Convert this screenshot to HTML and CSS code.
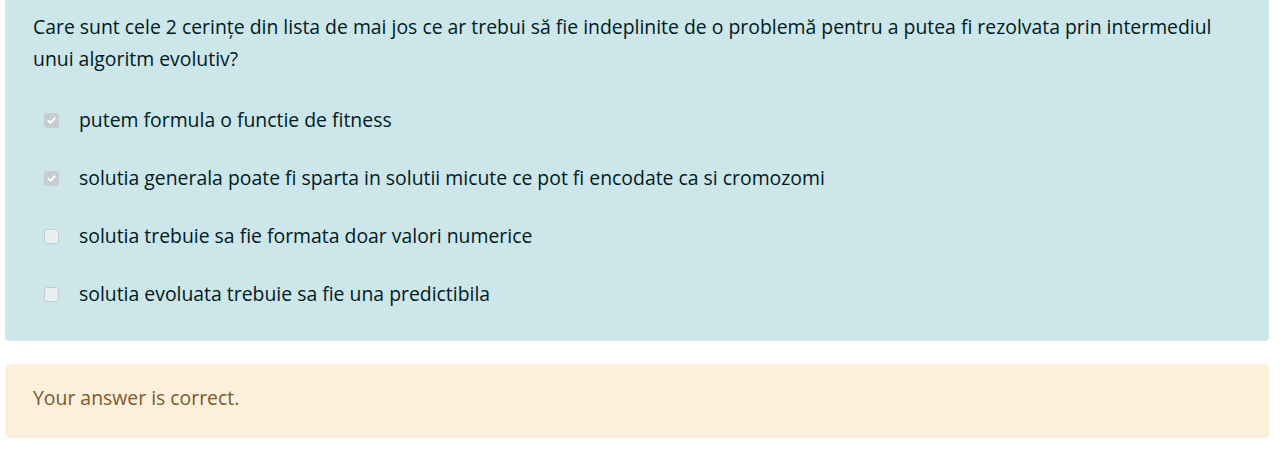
FILE: index.html
```html
<!DOCTYPE html>
<html lang="ro">
<head>
<meta charset="utf-8">
<title>Quiz</title>
<link rel="stylesheet" href="styles.css">
</head>
<body>
<div class="que">
  <div class="formulation">
    <div class="qtext">Care sunt cele 2 cerințe din lista de mai jos ce ar trebui să fie indeplinite de o problemă pentru a putea fi rezolvata prin intermediul unui algoritm evolutiv?</div>
    <div class="answer">
      <div class="option">
        <span class="cb checked"><svg viewBox="0 0 15 15" width="15" height="15"><path d="M3.6 7.7 L6.3 10.3 L11.4 4.8" fill="none" stroke="#fff" stroke-width="1.9" stroke-linecap="round" stroke-linejoin="round"/></svg></span>
        <span class="label">putem formula o functie de fitness</span>
      </div>
      <div class="option">
        <span class="cb checked"><svg viewBox="0 0 15 15" width="15" height="15"><path d="M3.6 7.7 L6.3 10.3 L11.4 4.8" fill="none" stroke="#fff" stroke-width="1.9" stroke-linecap="round" stroke-linejoin="round"/></svg></span>
        <span class="label">solutia generala poate fi sparta in solutii micute ce pot fi encodate ca si cromozomi</span>
      </div>
      <div class="option">
        <span class="cb"></span>
        <span class="label">solutia trebuie sa fie formata doar valori numerice</span>
      </div>
      <div class="option">
        <span class="cb"></span>
        <span class="label">solutia evoluata trebuie sa fie una predictibila</span>
      </div>
    </div>
  </div>
  <div class="outcome">Your answer is correct.</div>
</div>
</body>
</html>
```
FILE: styles.css
```css
html, body {
  margin: 0;
  padding: 0;
  background: #ffffff;
}
body {
  font-family: "Open Sans", "Noto Sans", sans-serif;
  font-size: 19.4px;
}
.que {
  width: 1264px;
  margin-left: 5px;
  display: flex;
  flex-direction: column;
  gap: 23px;
}
.formulation {
  background: #cce6ea;
  color: #001a1e;
  border-radius: 0 0 4px 4px;
  padding: 11px 28px 18px 28px;
}
.qtext {
  line-height: 32px;
}
.answer {
  margin-top: 16px;
  display: flex;
  flex-direction: column;
}
.option {
  display: flex;
  align-items: center;
  height: 58px;
  padding-left: 11px;
}
.cb {
  width: 15px;
  height: 15px;
  box-sizing: border-box;
  border-radius: 3px;
  border: 1px solid #c4cdcf;
  background: #eaeff0;
  display: flex;
  align-items: center;
  justify-content: center;
  flex: none;
}
.cb.checked {
  background: #c7cdce;
  border-color: #c7cdce;
}
.cb svg {
  display: block;
}
.label {
  margin-left: 20px;
  line-height: 26px;
}
.outcome {
  background: #fcefdc;
  color: #7d5a29;
  border-radius: 4px;
  height: 74px;
  box-sizing: border-box;
  padding: 0 28px 7px 28px;
  display: flex;
  align-items: center;
}
```
